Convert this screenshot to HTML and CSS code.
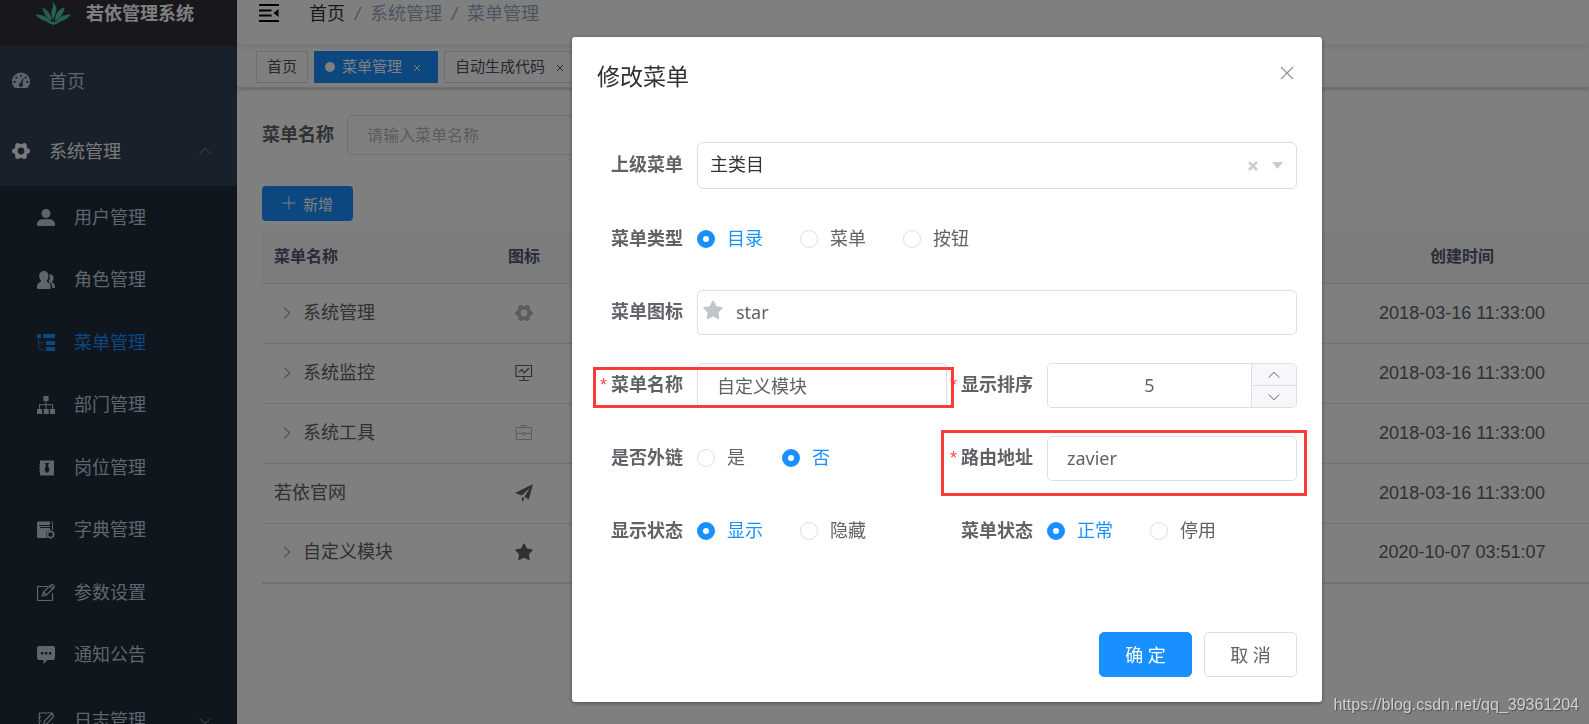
FILE: index.html
```html
<!DOCTYPE html>
<html lang="zh-CN">
<head>
<meta charset="utf-8">
<title>若依管理系统</title>
<link rel="stylesheet" href="styles.css">
</head>
<body>
<svg class="sprite" aria-hidden="true">
  <symbol id="i-gear" viewBox="0 0 18 18"><circle cx="9" cy="9" r="5.200" fill="none" stroke="currentColor" stroke-width="3.600"/><circle cx="15.500" cy="9" r="2.500"/><circle cx="12.300" cy="14.600" r="2.500"/><circle cx="5.700" cy="14.600" r="2.500"/><circle cx="2.500" cy="9" r="2.500"/><circle cx="5.700" cy="3.400" r="2.500"/><circle cx="12.300" cy="3.400" r="2.500"/></symbol>
  <symbol id="i-star" viewBox="0 0 20 20"><path d="M10 .6Q10.7.6 11 1.3L13.3 6.2 18.8 7Q20.4 7.4 19.3 8.6L15.4 12.5 16.3 18.2Q16.3 19.6 15 19L10 16.400 5 19Q3.700 19.600 3.700 18.200L4.600 12.500.7 8.600Q-.4 7.400 1.200 7L6.700 6.200 9 1.300Q9.300.6 10 .6Z"/></symbol>
  <symbol id="i-up" viewBox="0 0 12 12"><path d="M.7 8.500 6 3.300l5.300 5.200" fill="none" stroke="currentColor"/></symbol>
  <symbol id="i-down" viewBox="0 0 12 12"><path d="M.7 3.500 6 8.700l5.300-5.200" fill="none" stroke="currentColor"/></symbol>
  <symbol id="i-right" viewBox="0 0 12 12"><path d="M3.200.7 8.700 6l-5.500 5.300" fill="none" stroke="currentColor"/></symbol>
</svg>
<div class="app">
  <aside class="sidebar">
    <div class="logo">
      <svg width="36" height="24" viewBox="0 0 36 24"><g fill="#4cc09e"><path d="M18.500 19C15.800 15 15.800 11 17.300 7.500 18.300 5 18.200 3 17 .5 21.500 4 22 8 20.800 11.500 20 14 18.800 16 18.500 19Z"/><path d="M17 20C11.500 17 8.500 12 7.500 6.500 12.500 9 16.500 14 17 20Z"/><path d="M20 20C19.500 14 23 8.500 29.500 6 29 12 25.500 17 20 20Z"/><path d="M16.500 21.500C9 21 4 17.500 0 13.500 8 13.500 13.500 16 16.500 21.500Z"/><path d="M20.500 21.500C23.500 16 29 13.500 36 13.500 32.500 17.500 28 21 20.500 21.500Z"/><path d="M12 21.500 18.300 20.500 25 21.500 18.500 24Z"/></g></svg>
      <h1 class="logo-title">若依管理系统</h1>
    </div>
    <ul class="menu">
      <li class="menu-item"><svg width="18" height="18" viewBox="0 0 18 18"><path fill-rule="evenodd" d="M2.300 15.500A9 9 0 1 1 15.700 15.500Q15 16 14 16H4Q3 16 2.300 15.500ZM8.200 11.200a2 2 0 1 0 2.200.4L11.600 6.500 10.900 6.300ZM9 2.600a1.100 1.100 0 1 0 .01 0ZM4.400 4.600a1.100 1.100 0 1 0 .01 0ZM13.600 4.600a1.100 1.100 0 1 0 .01 0ZM2.600 8.800a1.100 1.100 0 1 0 .01 0ZM15.400 8.800a1.100 1.100 0 1 0 .01 0Z"/></svg><span>首页</span></li>
      <li class="menu-item open"><svg width="18" height="18"><use href="#i-gear"/></svg><span>系统管理</span><svg class="caret" width="12" height="12"><use href="#i-up"/></svg></li>
    </ul>
    <ul class="submenu">
      <li><svg width="18" height="18" viewBox="0 0 18 18"><circle cx="9" cy="4.500" r="4.500"/><path d="M0 15.500C0 12 3 10.300 6 10.300h6c3 0 6 1.700 6 5.200Q18 17 16.500 17h-15Q0 17 0 15.500Z"/></svg><span>用户管理</span></li>
      <li><svg width="18" height="18" viewBox="0 0 18 18"><path d="M6.800 0c3 0 4.700 2.400 4.700 5.200 0 2-.9 3.600-1.900 4.600 0 1 .5 1.200 1.600 1.700 2 .9 2.500 1.900 2.500 5.500q0 1-1 1H1q-1 0-1-1c0-3.600.6-4.600 2.600-5.500 1.100-.5 1.500-.7 1.500-1.700-1-1-1.900-2.600-1.900-4.600C2.200 2.400 3.900 0 6.800 0ZM11.500 3c3.400 0 5 1.300 5 4 0 1.900-.8 3.100-1.500 3.800 0 .8.300 1 1.100 1.400 1.500.7 1.900 1.800 1.900 4.800h-2.700c0-3.200-.8-4.700-3-5.700-.6-.3-.7-.7-.4-1.200.9-1.500 1.300-3.700.6-6.600Z"/></svg><span>角色管理</span></li>
      <li class="active"><svg width="18" height="18" viewBox="0 0 18 18"><path d="M0 0h4v4H0zM6 0h12v4H6zM9 7h9v4H9zM9 13h9v4H9z"/><path d="M1.500 4v10q0 1.500 1.500 1.500h4M1.500 8.500h5" fill="none" stroke="currentColor" opacity=".7"/></svg><span>菜单管理</span></li>
      <li><svg width="18" height="18" viewBox="0 0 18 18"><path d="M6.500 0h5v5h-5zM0 13h5v5H0zM6.700 13h5v5h-5zM13 13h5v5h-5z"/><path d="M9 5v8M2.500 13V8.700h13V13" fill="none" stroke="currentColor"/></svg><span>部门管理</span></li>
      <li><svg width="18" height="18" viewBox="0 0 18 18"><path fill-rule="evenodd" d="M3 1.500h14v15H3zM7.500 4l1.500 2-1.500 5.500L10 14l2.500-2.500L11 6l1.500-2z"/><path d="M2 6h3M2 9h3M2 12h3" stroke="currentColor"/></svg><span>岗位管理</span></li>
      <li><svg width="18" height="18" viewBox="0 0 18 18"><path d="M0 2q0-1.500 1.500-1.500H13V4H2v1h11v1H3v1h10v2.500q-4 .5-4 4 0 2 1.500 3.500h-9Q0 17 0 15.500z"/><path d="M14 .8q1.500 0 1.500 1.500V9" fill="none" stroke="currentColor"/><circle cx="13.500" cy="13.500" r="3" fill="none" stroke="currentColor" stroke-width="1.500"/><path d="M13.500 9v2M13.500 16v2M9 13.500h2M16 13.500h2M10.500 10.500l1 1M15.500 15.500l1 1M10.500 16.500l1-1M15.500 11.500l1-1" stroke="currentColor"/></svg><span>字典管理</span></li>
      <li><svg width="18" height="18" viewBox="0 0 18 18"><path d="M11 2.500H1.500q-1 0-1 1v12q0 1 1 1h13q1 0 1-1V9M5.500 12l1-4L14.300.8q.7-.5 1.400 0l1.300 1.300q.5.7 0 1.400L9.500 11zM13 2l3 3M6.500 8l3 3" fill="none" stroke="currentColor" stroke-width="1.200"/></svg><span>参数设置</span></li>
      <li><svg width="18" height="18" viewBox="0 0 18 18"><path fill-rule="evenodd" d="M2 0h14q2 0 2 2v10q0 2-2 2h-5.500L6.500 18v-4H2q-2 0-2-2V2q0-2 2-2ZM4 6v2.500h2.300V6ZM8 6v2.500h2.300V6ZM12 6v2.500h2.300V6Z"/></svg><span>通知公告</span></li>
      <li class="group"><svg width="18" height="18" viewBox="0 0 18 18"><path d="M2.500 4V1h13v2M2.500 5v3M2.500 10v3M2.500 15v2h13v-6M1 5h3M1 9h3M1 13h3M6.500 13l1-4 6.500-6.500q1-.7 2 .3t.3 2L10 11.500z" fill="none" stroke="currentColor" stroke-width="1.200"/></svg><span>日志管理</span><svg class="caret" width="12" height="12"><use href="#i-down"/></svg></li>
    </ul>
  </aside>
  <main class="main">
    <header class="navbar">
      <svg width="20" height="18" viewBox="0 0 20 18"><path d="M0 1h20M0 6.500h12.500M0 11.500h12.500M0 17h20" stroke="#000" stroke-width="2"/><path fill="#000" d="M19.500 5v8L14.500 9z"/></svg>
      <nav class="crumbs"><a href="#">首页</a><i>/</i><span>系统管理</span><i>/</i><span>菜单管理</span></nav>
    </header>
    <nav class="tags">
      <a class="tag" href="#">首页</a>
      <a class="tag current" href="#"><b class="dot"></b>菜单管理<svg width="20" height="8" viewBox="0 0 20 8"><path d="M7 1l6 6M13 1l-6 6" stroke="currentColor"/></svg></a>
      <a class="tag" href="#">自动生成代码<svg width="20" height="8" viewBox="0 0 20 8"><path d="M7 1l6 6M13 1l-6 6" stroke="currentColor"/></svg></a>
    </nav>
    <section class="content">
      <form class="search">
        <label for="q">菜单名称</label>
        <input id="q" type="text" placeholder="请输入菜单名称">
      </form>
      <button class="add" type="button"><svg width="14" height="14" viewBox="0 0 14 14"><path d="M7 .5v13M.5 7h13" stroke="currentColor"/></svg>新增</button>
      <table class="grid">
        <thead><tr><th class="name">菜单名称</th><th class="icon">图标</th><th></th><th class="time">创建时间</th></tr></thead>
        <tbody>
          <tr><td><div class="node"><svg width="12" height="12"><use href="#i-right"/></svg>系统管理</div></td><td class="icon pale"><svg width="18" height="18"><use href="#i-gear"/></svg></td><td></td><td class="time">2018-03-16 11:33:00</td></tr>
          <tr><td><div class="node"><svg width="12" height="12"><use href="#i-right"/></svg>系统监控</div></td><td class="icon"><svg width="18" height="18" viewBox="0 0 18 18"><path d="M1 1.500h15.500v11H1zM8.700 12.500v4M4 16.500h10M4 8l3-2.500L9 9l5-5" fill="none" stroke="currentColor" stroke-width="1.200"/></svg></td><td></td><td class="time">2018-03-16 11:33:00</td></tr>
          <tr><td><div class="node"><svg width="12" height="12"><use href="#i-right"/></svg>系统工具</div></td><td class="icon pale"><svg width="18" height="18" viewBox="0 0 18 18"><path d="M1 4.500q0-1 1-1h14q.5 0 .5 1v11H1.500zM6 3.500v-2h5v2M1 9.500h6.500M10 9.500h6.500M7.500 8.500H10V11H7.500z" fill="none" stroke="currentColor"/></svg></td><td></td><td class="time">2018-03-16 11:33:00</td></tr>
          <tr><td>若依官网</td><td class="icon"><svg width="18" height="18" viewBox="0 0 18 18"><path d="M18 0 13.800 15.500 9.300 12.800 15 4 6.700 11.500 0 9ZM6.800 13l2.700 1.500L7.200 18z"/></svg></td><td></td><td class="time">2018-03-16 11:33:00</td></tr>
          <tr><td><div class="node"><svg width="12" height="12"><use href="#i-right"/></svg>自定义模块</div></td><td class="icon"><svg width="18" height="18"><use href="#i-star"/></svg></td><td></td><td class="time">2020-10-07 03:51:07</td></tr>
        </tbody>
      </table>
    </section>
  </main>
</div>
<div class="mask">
  <form class="dialog" role="dialog" aria-labelledby="dlg-title">
    <header class="dialog-head">
      <h2 id="dlg-title">修改菜单</h2>
      <button class="close" type="button" aria-label="关闭"><svg width="14" height="14" viewBox="0 0 14 14"><path d="M1 1l12 12M13 1 1 13" stroke="currentColor" stroke-width="1.200"/></svg></button>
    </header>
    <div class="fields">
      <div class="field wide">
        <label class="label" for="parent">上级菜单</label>
        <div class="select">
          <select id="parent"><option>主类目</option></select>
          <button class="clear" type="button" aria-label="清除"><svg width="10" height="10" viewBox="0 0 10 10"><path d="M1 1l8 8M9 1 1 9" stroke="currentColor" stroke-width="2.500"/></svg></button>
          <svg class="arrow" width="11" height="7" viewBox="0 0 11 7"><path d="M0 0h11L5.500 7z"/></svg>
        </div>
      </div>
      <div class="field wide" role="radiogroup" aria-label="菜单类型">
        <span class="label">菜单类型</span>
        <label class="radio"><input type="radio" name="type" checked><span>目录</span></label>
        <label class="radio"><input type="radio" name="type"><span>菜单</span></label>
        <label class="radio"><input type="radio" name="type"><span>按钮</span></label>
      </div>
      <div class="field wide">
        <label class="label" for="icon">菜单图标</label>
        <div class="with-icon"><svg width="20" height="20"><use href="#i-star"/></svg><input class="input" id="icon" type="text" value="star"></div>
      </div>
      <div class="field">
        <label class="label required" for="name">菜单名称</label>
        <input class="input" id="name" type="text" value="自定义模块">
        <div class="mark mark-name"></div>
      </div>
      <div class="field">
        <label class="label required" for="order">显示排序</label>
        <div class="number">
          <input id="order" type="number" value="5">
          <div class="steps">
            <button type="button" aria-label="增加"><svg width="12" height="12"><use href="#i-up"/></svg></button>
            <button type="button" aria-label="减少"><svg width="12" height="12"><use href="#i-down"/></svg></button>
          </div>
        </div>
      </div>
      <div class="field" role="radiogroup" aria-label="是否外链">
        <span class="label">是否外链</span>
        <label class="radio"><input type="radio" name="link"><span>是</span></label>
        <label class="radio"><input type="radio" name="link" checked><span>否</span></label>
      </div>
      <div class="field">
        <label class="label required" for="path">路由地址</label>
        <input class="input" id="path" type="text" value="zavier">
        <div class="mark mark-path"></div>
      </div>
      <div class="field" role="radiogroup" aria-label="显示状态">
        <span class="label">显示状态</span>
        <label class="radio"><input type="radio" name="visible" checked><span>显示</span></label>
        <label class="radio"><input type="radio" name="visible"><span>隐藏</span></label>
      </div>
      <div class="field" role="radiogroup" aria-label="菜单状态">
        <span class="label">菜单状态</span>
        <label class="radio"><input type="radio" name="status" checked><span>正常</span></label>
        <label class="radio"><input type="radio" name="status"><span>停用</span></label>
      </div>
    </div>
    <footer class="dialog-foot">
      <button class="btn primary" type="button">确 定</button>
      <button class="btn" type="button">取 消</button>
    </footer>
  </form>
</div>
<div class="watermark">https://blog.csdn.net/qq_39361204</div>
</body>
</html>
```

FILE: styles.css
```css
* {
  box-sizing: border-box;
}

body {
  margin: 0;
  height: 100vh;
  overflow: hidden;
  font: 18px/24px "Liberation Sans", "Noto Sans CJK SC", sans-serif;
  color: #606266;
}

h1, h2, ul {
  margin: 0;
  padding: 0;
  list-style: none;
}

a {
  color: inherit;
  text-decoration: none;
}

button, input, select {
  font-family: "Noto Sans", "Noto Sans CJK SC", sans-serif;
  font-size: 18px;
  color: inherit;
  margin: 0;
  outline: none;
}

button {
  background: none;
  border: 0;
  padding: 0;
}

svg {
  flex: none;
  fill: currentColor;
}

.sprite {
  position: absolute;
  width: 0;
  height: 0;
}

.app {
  display: flex;
  height: 100vh;
}

/* Sidebar */
.sidebar {
  flex: none;
  width: 237px;
  overflow: hidden;
  background: #304156;
  color: #bfcbd9;
}

.logo {
  display: flex;
  align-items: center;
  justify-content: center;
  gap: 15px;
  height: 46px;
  padding: 0 8px 20px 0;
  background: #2f2f38;
}

.logo-title {
  padding-top: 2px;
  font-size: 18px;
  line-height: 24px;
  font-weight: bold;
  color: #fff;
}

.menu-item,
.submenu li {
  display: flex;
  align-items: center;
  gap: 19px;
  padding: 0 26px 0 12px;
}

.menu-item {
  height: 70px;
}

.menu-item span {
  padding-top: 2px;
}

.menu-item.open {
  color: #f4f4f5;
}

.caret {
  margin-left: auto;
  color: #909399;
}

.submenu {
  background: #1f2d3d;
}

.submenu li {
  height: 63px;
  padding-left: 37px;
}

.submenu li:nth-child(even) {
  height: 62px;
}

.submenu .group {
  height: 70px;
}

.submenu .active {
  color: #1890ff;
}

/* Top bars */
.main {
  flex: 1;
  min-width: 0;
  background: #fff;
}

.navbar {
  display: flex;
  align-items: center;
  gap: 30px;
  height: 46px;
  padding: 0 22px 20px;
  box-shadow: 0 1px 4px rgba(0, 21, 41, .08);
}

.crumbs {
  display: flex;
  padding-top: 2px;
  color: #97a8be;
}

.crumbs a {
  color: #303133;
}

.crumbs i {
  margin: 0 10px;
  color: #a0a4ac;
}

.tags {
  display: flex;
  gap: 6px;
  height: 42px;
  padding: 5px 19px;
  border-bottom: 1px solid #d8dce5;
  box-shadow: 0 1px 4px rgba(0, 0, 0, .25);
}

.tag {
  display: flex;
  align-items: center;
  height: 32px;
  padding: 0 10px;
  border: 1px solid #d8dce5;
  font-size: 15px;
  color: #495060;
  white-space: nowrap;
}

.tag svg {
  margin: 2px 0 0 5px;
}

.tag.current {
  border-color: #1890ff;
  background: #1890ff;
  color: #fff;
}

.dot {
  width: 10px;
  height: 10px;
  margin-right: 7px;
  border-radius: 50%;
  background: #fff;
}

/* Page content */
.content {
  padding: 27px 0 0 25px;
}

.search {
  display: flex;
  align-items: center;
  gap: 13px;
  margin-bottom: 31px;
}

.search label {
  font-weight: bold;
}

.search input {
  width: 300px;
  height: 40px;
  padding: 0 19px;
  border: 1px solid #dcdfe6;
  border-radius: 5px;
  font-size: 16px;
}

.search input::placeholder {
  color: #b4b8c0;
}

.add {
  display: flex;
  align-items: center;
  gap: 7px;
  height: 35px;
  margin-bottom: 10px;
  padding: 0 20px 1px;
  border-radius: 4px;
  background: #1890ff;
  color: #fff;
  font-size: 15px;
}

.grid {
  width: 100%;
  table-layout: fixed;
  border-collapse: separate;
  border-spacing: 0;
  border-bottom: 1px solid #dfe6ec;
}

.grid th,
.grid td {
  padding: 0 12px;
  border-bottom: 1px solid #dfe2e6;
  text-align: left;
}

.grid th {
  height: 53px;
  background: #f8f8f9;
  color: #515a6e;
  font-size: 16px;
}

.grid td {
  height: 60px;
  padding-bottom: 2px;
}

.grid tr:last-child td {
  height: 59px;
}

.grid th.name {
  width: 200px;
}

.grid .icon {
  width: 124px;
  text-align: center;
}

.grid .icon svg {
  display: block;
  margin: 0 auto;
}

.grid .pale {
  color: #b8b8b8;
}

.grid .time {
  width: 254px;
  text-align: center;
}

.node {
  display: flex;
  align-items: center;
  gap: 10px;
  padding-left: 7px;
}

/* Dialog */
.mask {
  position: fixed;
  inset: 0;
  display: flex;
  justify-content: center;
  align-items: flex-start;
  padding: 37px 0 0 305px;
  background: rgba(0, 0, 0, .5);
}

.dialog {
  width: 750px;
  padding: 25px;
  border-radius: 3px;
  background: #fff;
  box-shadow: 0 1px 4px rgba(0, 0, 0, .4);
}

.dialog-head {
  display: flex;
  justify-content: space-between;
  align-items: center;
  height: 30px;
  margin-bottom: 50px;
}

.dialog-head h2 {
  font-size: 23px;
  line-height: 30px;
  font-weight: normal;
  color: #303133;
}

.close {
  height: 14px;
  padding: 0 3px;
  margin-bottom: 8px;
  line-height: 0;
  color: #909399;
}

.fields {
  display: grid;
  grid-template-columns: repeat(2, minmax(0, 1fr));
  row-gap: 28px;
}

.field {
  position: relative;
  display: flex;
  align-items: center;
  min-height: 45px;
}

.wide {
  grid-column: 1 / -1;
}

.label {
  flex: none;
  width: 100px;
  padding: 0 14px 2px 0;
  text-align: right;
  font-weight: bold;
  white-space: nowrap;
}

.required::before {
  content: "*";
  margin-right: 4px;
  font-weight: normal;
  font-size: 18px;
  color: #ff4949;
}

.input,
.select,
.number {
  flex: 1;
  min-width: 0;
  width: 100%;
  height: 45px;
  border: 1px solid #dcdfe6;
  border-radius: 5px;
  background: #fff;
}

.input {
  padding: 0 19px 2px;
}

.select {
  display: flex;
  align-items: center;
  height: 47px;
  padding-right: 13px;
  border-color: #ddd;
  border-radius: 6px;
  color: #ccc;
}

.select select {
  flex: 1;
  height: 45px;
  padding: 0 12px 3px;
  border: 0;
  background: none;
  appearance: none;
  color: #333;
}

.clear {
  line-height: 0;
  margin-right: 14px;
}

.with-icon {
  position: relative;
  flex: 1;
}

.with-icon svg {
  position: absolute;
  left: 6px;
  top: 10px;
  color: #c0c4cc;
}

.with-icon .input {
  display: block;
  padding-left: 38px;
}

.number {
  display: flex;
  overflow: hidden;
}

.number input {
  flex: 1;
  min-width: 0;
  padding: 0 0 2px;
  border: 0;
  text-align: center;
  appearance: textfield;
}

.number input::-webkit-inner-spin-button {
  display: none;
}

.steps {
  display: grid;
  width: 45px;
  border-left: 1px solid #dcdfe6;
  background: #f5f7fa;
}

.steps button {
  display: flex;
  align-items: center;
  justify-content: center;
}

.steps button + button {
  border-top: 1px solid #dcdfe6;
}

.radio {
  display: flex;
  flex: none;
  align-items: center;
  gap: 12px;
  margin-right: 37px;
  padding-bottom: 1px;
}

.radio input {
  width: 18px;
  height: 18px;
  border: 1px solid #dcdfe6;
  border-radius: 50%;
  background: #fff;
  appearance: none;
}

.radio input:checked {
  border: 6px solid #1890ff;
}

.radio input:checked + span {
  color: #1890ff;
}

.mark {
  position: absolute;
  z-index: 1;
  border: 3px solid #fd3a3a;
  pointer-events: none;
}

.mark-name {
  inset: 4px -7px 0 -4px;
}

.mark-path {
  inset: -6px -10px -15px -6px;
}

.dialog-foot {
  display: flex;
  justify-content: flex-end;
  gap: 12px;
  margin-top: 78px;
}

.btn {
  min-width: 93px;
  height: 45px;
  padding: 0 20px 1px;
  border: 1px solid #dcdfe6;
  border-radius: 5px;
}

.btn.primary {
  border-color: #1890ff;
  background: #1890ff;
  color: #fff;
}

.watermark {
  position: fixed;
  right: 10px;
  bottom: 7px;
  font-size: 16px;
  color: #d0d0d0;
  text-shadow: 1px 1px 1px rgba(0, 0, 0, .4);
}
```
